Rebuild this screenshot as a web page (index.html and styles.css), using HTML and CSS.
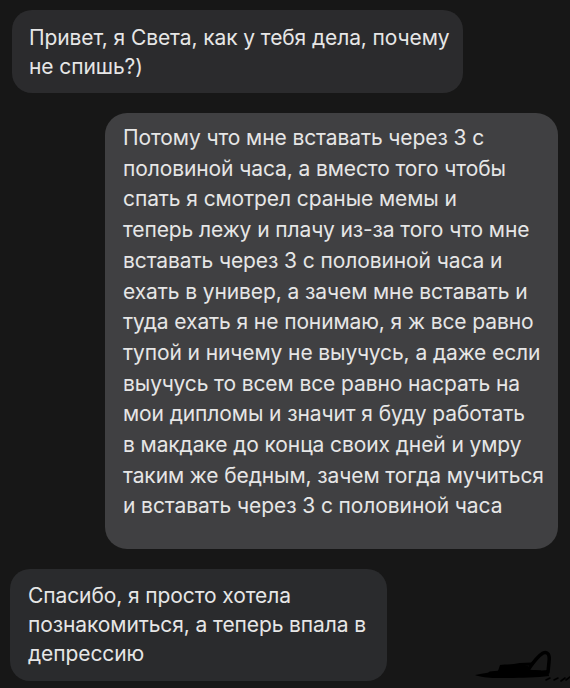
FILE: index.html
```html
<!DOCTYPE html>
<html lang="ru">
<head>
<meta charset="utf-8">
<title>Чат</title>
<link rel="stylesheet" href="styles.css">
</head>
<body>
<main class="chat">
  <div class="bubble bubble--in bubble--first">Привет, я Света, как у тебя дела, почему<br>не спишь?)</div>
  <div class="bubble bubble--out">Потому что мне вставать через 3 с<br>половиной часа, а вместо того чтобы<br>спать я смотрел сраные мемы и<br>теперь лежу и плачу из-за того что мне<br>вставать через 3 с половиной часа и<br>ехать в универ, а зачем мне вставать и<br>туда ехать я не понимаю, я ж все равно<br>тупой и ничему не выучусь, а даже если<br>выучусь то всем все равно насрать на<br>мои дипломы и значит я буду работать<br>в макдаке до конца своих дней и умру<br>таким же бедным, зачем тогда мучиться<br>и вставать через 3 с половиной часа</div>
  <div class="bubble bubble--in bubble--last">Спасибо, я просто хотела<br>познакомиться, а теперь впала в<br>депрессию</div>
</main>
<svg class="signature" viewBox="0 0 100 48" aria-hidden="true">
  <path d="M5 35 C14 33 22 32 28 31 L30 25 C40 24 52 25 58 26 L60 30 C66 30 72 31 78 30 L79 36 C64 38 44 38 26 38 C18 38 10 37 5 35 Z" fill="#000"/>
  <path d="M58 30 C62 24 68 16 73 13 C78 11 80 15 79 22 L78 32" fill="none" stroke="#000" stroke-width="3.5" stroke-linecap="round" stroke-linejoin="round"/>
  <path d="M36 27 C44 25 52 24 62 24 M20 33 C34 31 50 30 70 32" fill="none" stroke="#000" stroke-width="3" stroke-linecap="round"/>
  <path d="M76 40 L80 38 M84 40 L88 38 M91 41 L95 38 M96 40 L100 37" fill="none" stroke="#000" stroke-width="1.6" stroke-linecap="round"/>
</svg>
</body>
</html>
```

FILE: styles.css
```css
html, body {
  margin: 0;
  padding: 0;
  background: #171717;
  height: 100%;
  overflow: hidden;
}

.chat {
  display: flex;
  flex-direction: column;
  gap: 20px;
  padding: 10px 12px 0 12px;
  font-family: "Inter", "Noto Sans", sans-serif;
  font-size: 21px;
  line-height: 29px;
  letter-spacing: -0.1px;
  color: #e6e6e6;
}

.bubble {
  box-sizing: border-box;
  border-radius: 20px;
  padding: 13px 10px 12px 17px;
  background: #2b2b2d;
  white-space: nowrap;
}

.bubble--first {
  width: 451px;
  align-self: flex-start;
}

.bubble--out {
  width: 453px;
  align-self: flex-end;
  background: #404042;
  border-radius: 22px;
  line-height: 30.7px;
  padding: 10px 8px 27px 18px;
}

.bubble--last {
  width: 377px;
  align-self: flex-start;
  margin-left: -2px;
  background: #2a2b2d;
  padding: 12px 10px 13px 18px;
}

.signature {
  position: absolute;
  left: 470px;
  top: 640px;
  width: 100px;
  height: 48px;
}
```
